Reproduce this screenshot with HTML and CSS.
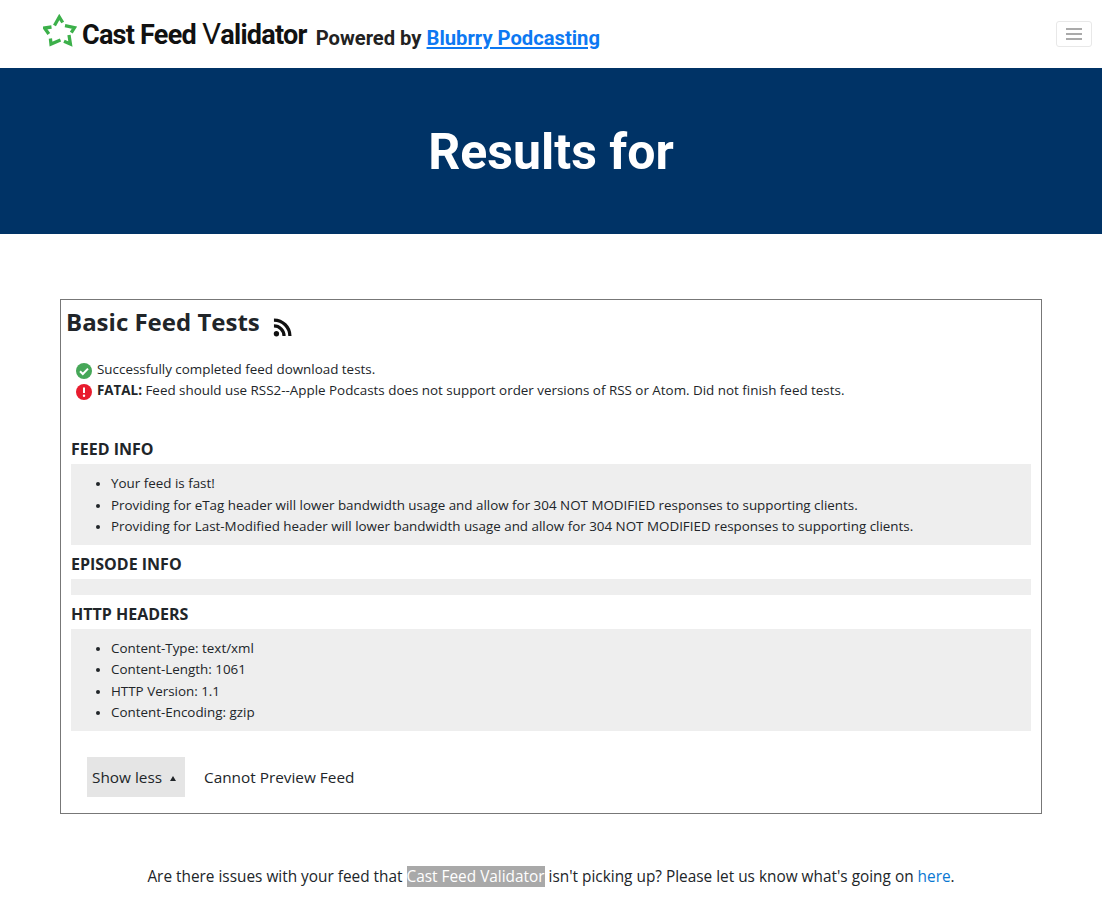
FILE: index.html
```html
<!DOCTYPE html>
<html lang="en">
<head>
<meta charset="UTF-8">
<meta name="viewport" content="width=device-width, initial-scale=1.0">
<title>Cast Feed Validator</title>
<link rel="stylesheet" href="styles.css">
</head>
<body>

<nav class="topbar">
    <a class="brand" href="#">
        <svg class="brand-star" viewBox="0 0 34 34" width="34" height="34" fill="none" stroke="#3cb04a" stroke-width="3.3">
            <path d="M11.5 11.5 16.3 3l3.4 5.5"/>
            <path d="M22 11.7l9.4 2-3.1 5"/>
            <path d="M26 21l1.4 9-6.4-2.8"/>
            <path d="M17.5 26 8 30 7.4 24.5"/>
            <path d="M8.500 13l-7 1 4.300 6"/>
        </svg>
        <span class="brand-name">Cast Feed <span class="brand-check">V</span>alidator</span>
    </a>
    <span class="powered">Powered by <a href="#">Blubrry Podcasting</a></span>
    <button class="menu-toggle" aria-label="Menu"><span></span><span></span><span></span></button>
</nav>

<header class="hero">
    <h1>Results for</h1>
</header>

<main class="results">
    <h2 class="results-title">Basic Feed Tests
        <svg class="rss-icon" viewBox="0 0 20 20" width="19" height="19" fill="none" stroke="#111" stroke-width="3.4">
            <circle cx="3.6" cy="16.6" r="2.8" fill="#111" stroke="none"/>
            <path d="M1 8.4a10.6 10.6 0 0 1 10.6 10.6"/>
            <path d="M1 2.2A16.8 16.8 0 0 1 17.8 19"/>
        </svg>
    </h2>

    <ul class="status">
        <li>
            <svg viewBox="0 0 16 16" width="16" height="16"><circle cx="8" cy="8" r="8" fill="#46a758"/><path d="M4 8.2l2.8 2.8L12 5.6" fill="none" stroke="#fff" stroke-width="2"/></svg>
            Successfully completed feed download tests.
        </li>
        <li>
            <svg viewBox="0 0 16 16" width="16" height="16"><circle cx="8" cy="8" r="8" fill="#e81c2e"/><path d="M8 3.5v5.5" stroke="#fff" stroke-width="2"/><circle cx="8" cy="11.8" r="1.2" fill="#fff"/></svg>
            <span><b>FATAL:</b> Feed should use RSS2--Apple Podcasts does not support order versions of RSS or Atom. Did not finish feed tests.</span>
        </li>
    </ul>

    <section class="group first">
        <h3>FEED INFO</h3>
        <ul>
            <li>Your feed is fast!</li>
            <li>Providing for eTag header will lower bandwidth usage and allow for 304 NOT MODIFIED responses to supporting clients.</li>
            <li>Providing for Last-Modified header will lower bandwidth usage and allow for 304 NOT MODIFIED responses to supporting clients.</li>
        </ul>
    </section>

    <section class="group">
        <h3>EPISODE INFO</h3>
        <ul></ul>
    </section>

    <section class="group">
        <h3>HTTP HEADERS</h3>
        <ul>
            <li>Content-Type: text/xml</li>
            <li>Content-Length: 1061</li>
            <li>HTTP Version: 1.1</li>
            <li>Content-Encoding: gzip</li>
        </ul>
    </section>

    <div class="actions">
        <button class="toggle">Show less <span class="caret"></span></button>
        <span>Cannot Preview Feed</span>
    </div>
</main>

<p class="issues">Are there issues with your feed that <span class="picked">Cast Feed Validator</span> isn't picking up? Please let us know what's going on <a href="#">here</a>.</p>

</body>
</html>
```

FILE: styles.css
```css
body {
    margin: 0;
    font-family: "Open Sans", "Noto Sans", sans-serif;
    color: #212529;
    background: #fff;
}

/* top bar */
.topbar {
    height: 68px;
    display: flex;
    align-items: center;
    padding: 0 10px 0 43px;
    box-sizing: border-box;
}
.brand {
    display: flex;
    align-items: center;
    color: #111;
    text-decoration: none;
    margin-top: 1px;
}
.brand-star {
    margin: -8px 5px 0 0;
}
.brand-name {
    font-family: Roboto, sans-serif;
    font-weight: 700;
    font-size: 27px;
    letter-spacing: -0.75px;
}
.brand-check {
    font-weight: 400;
    font-size: 30px;
    line-height: 1;
}
.powered {
    font-family: Roboto, sans-serif;
    font-weight: 700;
    font-size: 20.2px;
    color: #222;
    margin: 8px 0 0 9px;
}
.powered a {
    color: #0d78f2;
}
.menu-toggle {
    margin-left: auto;
    width: 36px;
    height: 26px;
    padding: 0;
    background: #fff;
    border: 1px solid #e8e8e8;
    border-radius: 3px;
    display: flex;
    flex-direction: column;
    align-items: center;
    justify-content: center;
    gap: 3px;
}
.menu-toggle span {
    width: 16px;
    height: 2px;
    background: #aaa;
}

/* navy band */
.hero {
    height: 166px;
    background: #003366;
    display: flex;
    align-items: center;
    justify-content: center;
}
.hero h1 {
    margin: 0;
    padding-top: 2px;
    font-family: Roboto, sans-serif;
    font-weight: 700;
    font-size: 50px;
    color: #fff;
}

/* results box */
.results {
    margin: 65px 60px 0;
    height: 515px;
    box-sizing: border-box;
    border: 1px solid #777;
    padding: 0 10px 0 5px;
}
.results-title {
    margin: 5px 0 0;
    font-size: 24px;
    line-height: 34px;
    font-weight: 700;
}
.rss-icon {
    vertical-align: -6px;
    margin-left: 7px;
}
.status {
    list-style: none;
    margin: 20px 0 0;
    padding: 0 0 0 10px;
    font-size: 13.4px;
    line-height: 21px;
}
.status li {
    display: flex;
    align-items: center;
    gap: 5px;
}
.status svg {
    margin-top: 2px;
}
.group {
    margin-left: 5px;
}
.group.first {
    margin-top: 38px;
}
.group h3 {
    margin: 9px 0 0;
    font-size: 16px;
    line-height: 21px;
    font-weight: 700;
}
.group ul {
    margin: 4px 0 0;
    padding: 9px 0 7px 40px;
    background: #eee;
    font-size: 13.4px;
    line-height: 21.5px;
    list-style: disc;
}
.group li::marker {
    font-size: 11.5px;
}

.actions {
    display: flex;
    align-items: center;
    gap: 19px;
    margin: 26px 0 0 21px;
    font-size: 15.35px;
}
.toggle {
    height: 40px;
    width: 98px;
    padding: 0 0 0 5px;
    border: 0;
    background: #e5e5e5;
    color: #212529;
    font: inherit;
    text-align: left;
}
.caret {
    display: inline-block;
    width: 0;
    height: 0;
    margin: 0 0 2px 4px;
    border-left: 3px solid transparent;
    border-right: 3px solid transparent;
    border-bottom: 5px solid #212529;
}

/* footer line */
.issues {
    margin: 52px 0 0;
    text-align: center;
    font-size: 15.38px;
    line-height: 22px;
}
.issues a {
    color: #0a78d2;
    text-decoration: none;
}
.picked {
    background: #a9a9a9;
    color: #fff;
}
```
